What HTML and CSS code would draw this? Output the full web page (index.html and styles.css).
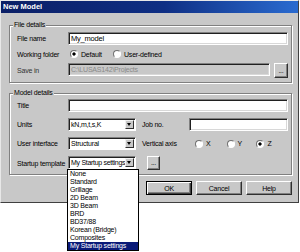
FILE: index.html
```html
<!DOCTYPE html>
<html lang="en">
<head>
    <meta charset="UTF-8">
    <title>New Model</title>
    <link rel="stylesheet" href="styles.css">
</head>
<body>
<div class="dialog">
    <div class="titlebar">New Model</div>
    <div class="content">
        <div class="group">
            <span class="caption">File details</span>
            <div class="file-grid">
                <label>File name</label>
                <input type="text" class="edit" value="My_model">

                <label>Working folder</label>
                <div class="radios">
                    <span class="opt opt-default"><input type="radio" name="folder" checked> Default</span>
                    <span class="opt"><input type="radio" name="folder"> User-defined</span>
                </div>

                <label class="dim">Save in</label>
                <div class="browse">
                    <input type="text" class="edit" value="C:\LUSAS142\Projects" disabled>
                    <button class="btn dots tall">...</button>
                </div>
            </div>
        </div>

        <div class="group model">
            <span class="caption">Model details</span>
            <div class="model-grid">
                <label>Title</label>
                <input type="text" class="edit span3" value="">

                <label>Units</label>
                <div class="combo"><span class="val">kN,m,t,s,K</span><span class="arrow"></span></div>
                <label class="pad">Job no.</label>
                <input type="text" class="edit" value="">

                <label>User interface</label>
                <div class="combo"><span class="val">Structural</span><span class="arrow"></span></div>
                <label class="pad">Vertical axis</label>
                <div class="axes">
                    <span class="opt"><input type="radio" name="axis"> X</span>
                    <span class="opt"><input type="radio" name="axis"> Y</span>
                    <span class="opt"><input type="radio" name="axis" checked> Z</span>
                </div>

                <label>Startup template</label>
                <div class="combo open">
                    <span class="val tight">My Startup settings</span><span class="arrow"></span>
                    <ul class="droplist">
                        <li>None</li>
                        <li>Standard</li>
                        <li>Grillage</li>
                        <li>2D Beam</li>
                        <li>3D Beam</li>
                        <li>BRD</li>
                        <li>BD37/88</li>
                        <li>Korean (Bridge)</li>
                        <li>Composites</li>
                        <li class="sel">My Startup settings</li>
                    </ul>
                </div>
                <div class="pad-btn"><button class="btn dots">...</button></div>
            </div>
        </div>

        <div class="actions">
            <button class="btn push default">OK</button>
            <button class="btn push">Cancel</button>
            <button class="btn push">Help</button>
        </div>
    </div>
</div>
</body>
</html>
```

FILE: styles.css
```css
html, body {
  min-height: 100vh;
}
body {
  margin: 0;
  background: #fff;
  font-family: 'Liberation Sans', Arial, sans-serif;
  font-size: 7px;
  letter-spacing: -0.2px;
  color: #000;
}
.dialog {
  width: 297px;
  background: #c8c8c8;
  border: 1px solid;
  border-color: #e8e8e8 #404040 #404040 #e8e8e8;
}
.titlebar {
  height: 12px;
  line-height: 12px;
  padding-left: 2px;
  font-weight: 700;
  font-size: 7.5px;
  letter-spacing: 0;
  color: #fff;
  background: linear-gradient(90deg, #0b1f66 0%, #0f2f84 55%, #2a6bd0 100%);
}
.content {
  padding: 12px 6px 7px 8px;
}
.group {
  position: relative;
  padding: 6px 3px 4px 7px;
  border: 1px solid #808080;
  box-shadow: inset 1px 1px 0 #fff, 1px 1px 0 #fff;
}
.group.model {
  margin-top: 10px;
  padding-top: 5px;
  padding-bottom: 4px;
}
.caption {
  position: absolute;
  top: -5px;
  left: 3px;
  padding: 0 1px;
  line-height: 8px;
  background: #c8c8c8;
}
label {
  display: flex;
  align-items: center;
  white-space: nowrap;
}
.dim { color: #333; }
.file-grid {
  display: grid;
  grid-template-columns: 51px minmax(0, 1fr);
  grid-template-rows: 13px 12px 15px;
  row-gap: 3px;
}
.model-grid {
  display: grid;
  grid-template-columns: 51px 68px 53px minmax(0, 1fr);
  grid-template-rows: 13px 13px 13px 14px;
  row-gap: 6px;
}
.span3 { grid-column: 2 / -1; }
.pad { padding-left: 6px; }
.edit {
  box-sizing: border-box;
  width: 100%;
  min-width: 0;
  height: 13px;
  margin: 0;
  padding: 1px 2px 2px;
  font: inherit;
  font-size: 7.5px;
  letter-spacing: inherit;
  line-height: 8px;
  background: #fff;
  border: 1px solid;
  border-color: #808080 #fff #fff #808080;
  box-shadow: inset 1px 1px 0 #202020, inset -1px -1px 0 #d8d8d8;
  outline: none;
}
.edit:disabled {
  background: #c8c8c8;
  color: #8a8a8a;
  font-size: 7px;
}
.radios, .axes {
  display: flex;
  align-items: center;
}
.opt {
  display: flex;
  align-items: center;
  gap: 2px;
}
.opt-default { width: 43px; padding-left: 2px; }
.axes .opt { width: 37px; }
.axes .opt:first-child { margin-left: 6px; }
.axes .opt:nth-child(2) { width: 35px; }
input[type=radio] {
  appearance: none;
  -webkit-appearance: none;
  box-sizing: border-box;
  width: 8px;
  height: 8px;
  margin: 0 1px 0 0;
  border-radius: 50%;
  border: 1px solid;
  border-color: #707070 #fff #fff #707070;
  background: #fff;
}
input[type=radio]:checked {
  background: radial-gradient(circle, #000 0 1.4px, #fff 1.8px);
}
.browse {
  display: flex;
  gap: 4px;
  min-width: 0;
}
.browse .edit { flex: 1; height: 13px; }
.btn {
  box-sizing: border-box;
  margin: 0;
  padding: 0;
  font: inherit;
  letter-spacing: inherit;
  color: #000;
  background: #c8c8c8;
  border: 1px solid;
  border-color: #fff #303030 #303030 #fff;
  box-shadow: inset -1px -1px 0 #808080;
}
.dots {
  width: 13px;
  height: 14px;
  line-height: 8px;
}
.dots.tall { width: 14px; height: 15px; }
.pad-btn { padding-left: 11px; }
.combo {
  position: relative;
  box-sizing: border-box;
  display: flex;
  align-items: center;
  height: 13px;
  background: #fff;
  border: 1px solid;
  border-color: #808080 #fff #fff #808080;
  box-shadow: inset 1px 1px 0 #202020;
}
.combo .val {
  flex: 1;
  min-width: 0;
  padding-left: 2px;
  white-space: nowrap;
}
.combo .tight { letter-spacing: -0.3px; }
.arrow {
  position: relative;
  flex: none;
  box-sizing: border-box;
  width: 9px;
  height: 9px;
  margin-right: 1px;
  background: #c8c8c8;
  border: 1px solid;
  border-color: #f0f0f0 #303030 #303030 #f0f0f0;
}
.arrow::after {
  content: "";
  position: absolute;
  left: 1px;
  top: 2px;
  border-left: 2.5px solid transparent;
  border-right: 2.5px solid transparent;
  border-top: 3px solid #000;
}
.droplist {
  position: absolute;
  left: -2px;
  top: 12px;
  box-sizing: border-box;
  width: 72px;
  margin: 0;
  padding: 0;
  list-style: none;
  background: #fff;
  border: 1px solid #000;
  z-index: 2;
}
.droplist li {
  height: 8px;
  line-height: 8px;
  padding-left: 2px;
  white-space: nowrap;
}
.droplist .sel {
  background: #0a1a78;
  color: #fff;
}
.actions {
  display: flex;
  justify-content: flex-end;
  gap: 4px;
  margin-top: 6px;
}
.push {
  width: 46px;
  height: 14px;
}
.push.default {
  border-color: #000;
  box-shadow: inset 1px 1px 0 #fff, inset -1px -1px 0 #404040, inset -2px -2px 0 #808080;
}
```
